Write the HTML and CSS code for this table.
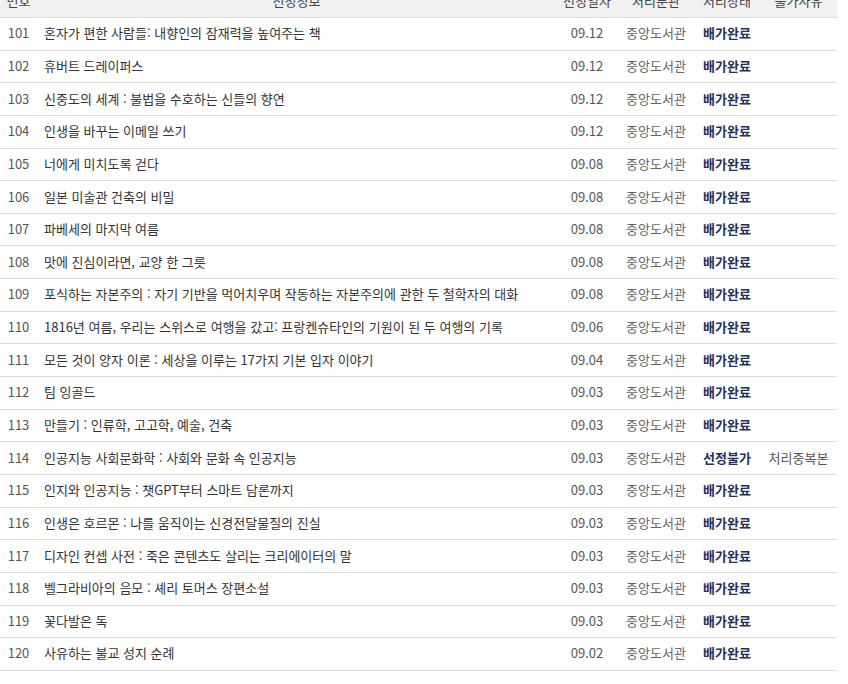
FILE: index.html
```html
<!DOCTYPE html>
<html lang="ko">
<head>
<meta charset="utf-8">
<link rel="stylesheet" href="styles.css">
</head>
<body>
<div class="wrap">
<table class="list">
<thead>
<tr><th class="c-no">번호</th><th class="c-title">선정정보</th><th class="c-date">선정일자</th><th class="c-lib">처리분관</th><th class="c-st">처리상태</th><th class="c-rs">불가사유</th></tr>
</thead>
<tbody>
<tr><td class="c-no">101</td><td class="c-title">혼자가 편한 사람들: 내향인의 잠재력을 높여주는 책</td><td class="c-date">09.12</td><td class="c-lib">중앙도서관</td><td class="c-st">배가완료</td><td class="c-rs"></td></tr>
<tr><td class="c-no">102</td><td class="c-title">휴버트 드레이퍼스</td><td class="c-date">09.12</td><td class="c-lib">중앙도서관</td><td class="c-st">배가완료</td><td class="c-rs"></td></tr>
<tr><td class="c-no">103</td><td class="c-title">신중도의 세계 : 불법을 수호하는 신들의 향연</td><td class="c-date">09.12</td><td class="c-lib">중앙도서관</td><td class="c-st">배가완료</td><td class="c-rs"></td></tr>
<tr><td class="c-no">104</td><td class="c-title">인생을 바꾸는 이메일 쓰기</td><td class="c-date">09.12</td><td class="c-lib">중앙도서관</td><td class="c-st">배가완료</td><td class="c-rs"></td></tr>
<tr><td class="c-no">105</td><td class="c-title">너에게 미치도록 걷다</td><td class="c-date">09.08</td><td class="c-lib">중앙도서관</td><td class="c-st">배가완료</td><td class="c-rs"></td></tr>
<tr><td class="c-no">106</td><td class="c-title">일본 미술관 건축의 비밀</td><td class="c-date">09.08</td><td class="c-lib">중앙도서관</td><td class="c-st">배가완료</td><td class="c-rs"></td></tr>
<tr><td class="c-no">107</td><td class="c-title">파베세의 마지막 여름</td><td class="c-date">09.08</td><td class="c-lib">중앙도서관</td><td class="c-st">배가완료</td><td class="c-rs"></td></tr>
<tr><td class="c-no">108</td><td class="c-title">맛에 진심이라면, 교양 한 그릇</td><td class="c-date">09.08</td><td class="c-lib">중앙도서관</td><td class="c-st">배가완료</td><td class="c-rs"></td></tr>
<tr><td class="c-no">109</td><td class="c-title">포식하는 자본주의 : 자기 기반을 먹어치우며 작동하는 자본주의에 관한 두 철학자의 대화</td><td class="c-date">09.08</td><td class="c-lib">중앙도서관</td><td class="c-st">배가완료</td><td class="c-rs"></td></tr>
<tr><td class="c-no">110</td><td class="c-title">1816년 여름, 우리는 스위스로 여행을 갔고: 프랑켄슈타인의 기원이 된 두 여행의 기록</td><td class="c-date">09.06</td><td class="c-lib">중앙도서관</td><td class="c-st">배가완료</td><td class="c-rs"></td></tr>
<tr><td class="c-no">111</td><td class="c-title">모든 것이 양자 이론 : 세상을 이루는 17가지 기본 입자 이야기</td><td class="c-date">09.04</td><td class="c-lib">중앙도서관</td><td class="c-st">배가완료</td><td class="c-rs"></td></tr>
<tr><td class="c-no">112</td><td class="c-title">팀 잉골드</td><td class="c-date">09.03</td><td class="c-lib">중앙도서관</td><td class="c-st">배가완료</td><td class="c-rs"></td></tr>
<tr><td class="c-no">113</td><td class="c-title">만들기 : 인류학, 고고학, 예술, 건축</td><td class="c-date">09.03</td><td class="c-lib">중앙도서관</td><td class="c-st">배가완료</td><td class="c-rs"></td></tr>
<tr><td class="c-no">114</td><td class="c-title">인공지능 사회문화학 : 사회와 문화 속 인공지능</td><td class="c-date">09.03</td><td class="c-lib">중앙도서관</td><td class="c-st">선정불가</td><td class="c-rs">처리중복본</td></tr>
<tr><td class="c-no">115</td><td class="c-title">인지와 인공지능 : 챗GPT부터 스마트 담론까지</td><td class="c-date">09.03</td><td class="c-lib">중앙도서관</td><td class="c-st">배가완료</td><td class="c-rs"></td></tr>
<tr><td class="c-no">116</td><td class="c-title">인생은 호르몬 : 나를 움직이는 신경전달물질의 진실</td><td class="c-date">09.03</td><td class="c-lib">중앙도서관</td><td class="c-st">배가완료</td><td class="c-rs"></td></tr>
<tr><td class="c-no">117</td><td class="c-title">디자인 컨셉 사전 : 죽은 콘텐츠도 살리는 크리에이터의 말</td><td class="c-date">09.03</td><td class="c-lib">중앙도서관</td><td class="c-st">배가완료</td><td class="c-rs"></td></tr>
<tr><td class="c-no">118</td><td class="c-title">벨그라비아의 음모 : 셰리 토머스 장편소설</td><td class="c-date">09.03</td><td class="c-lib">중앙도서관</td><td class="c-st">배가완료</td><td class="c-rs"></td></tr>
<tr><td class="c-no">119</td><td class="c-title">꽃다발은 독</td><td class="c-date">09.03</td><td class="c-lib">중앙도서관</td><td class="c-st">배가완료</td><td class="c-rs"></td></tr>
<tr><td class="c-no">120</td><td class="c-title">사유하는 불교 성지 순례</td><td class="c-date">09.02</td><td class="c-lib">중앙도서관</td><td class="c-st">배가완료</td><td class="c-rs"></td></tr>
</tbody>
</table>
</div>
</body>
</html>
```

FILE: styles.css
```css
html, body {
  margin: 0;
  padding: 0;
  background: #fff;
}
body {
  font-family: "Noto Sans CJK KR", "Noto Sans", sans-serif;
  font-size: 13px;
  color: #333;
}
.wrap {
  width: 837px;
  margin-top: -17px;
}
.list {
  width: 837px;
  border-collapse: collapse;
  table-layout: fixed;
}
.list th {
  background: #f1f1f1;
  font-weight: normal;
  color: #444;
  height: 34px;
  padding: 0;
  text-align: center;
  border-bottom: 1px solid #ddd;
}
.list td {
  height: 30.65px;
  padding: 0 0 1px;
  border-bottom: 1px solid #ddd;
  white-space: nowrap;
  line-height: 16px;
}
.c-no { width: 37px; }
.c-title { width: 519px; }
.c-date { width: 62px; }
.c-lib { width: 76px; }
.c-st { width: 66px; }
.c-rs { width: 77px; }
td.c-no { text-align: center; color: #555; }
td.c-title { text-align: left; padding-left: 7px; color: #333; }
td.c-date { text-align: center; color: #555; }
td.c-lib { text-align: center; color: #666; }
td.c-st { text-align: center; color: #22305a; font-weight: bold; }
td.c-rs { text-align: center; color: #555; }
```
